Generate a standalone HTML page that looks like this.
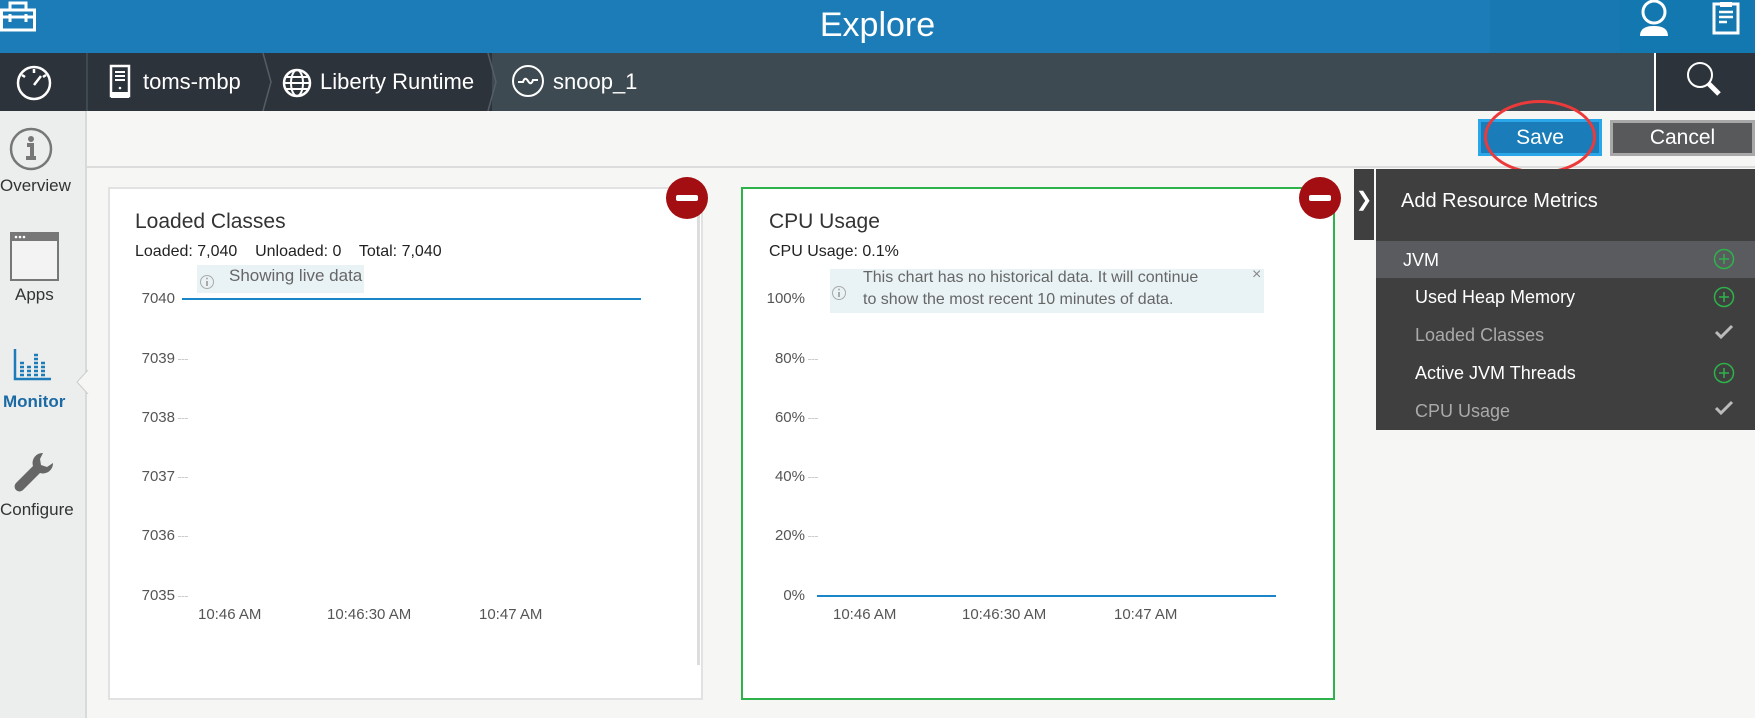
<!DOCTYPE html>
<html><head><meta charset="utf-8"><style>
*{margin:0;padding:0;box-sizing:border-box}
body{width:1755px;height:718px;overflow:hidden;background:#f6f6f4;font-family:"Liberation Sans",sans-serif;position:relative;color:#333}
.a{position:absolute}
.top{left:0;top:0;width:1755px;height:53px;background:#1b7cb8}
.nav{left:0;top:53px;width:1755px;height:58px;background:#3e4a52}
.t{white-space:nowrap}
.card{background:#fff;border:2px solid #e2e2e2}
.yl{font-size:15px;color:#555;text-align:right;width:40px}
.xl{font-size:15px;color:#555}
.minus{width:42px;height:42px;border-radius:50%;background:#a30e12}
.minus:after{content:"";position:absolute;left:10px;top:18px;width:22px;height:6px;background:#fff;border-radius:2px}
.row{left:1376px;width:379px;height:38px;background:#3f3f3f;color:#fff;font-size:18px}
.row span{position:absolute;left:39px;top:9px}
.tk{height:0;border-top:1px dashed #ccc;width:10px}
</style></head><body>
<div class="a top"></div>
<div class="a" style="left:1620px;top:0;width:135px;height:53px;background:#1378b0"></div>
<div class="a" style="left:1490px;top:0;width:130px;height:53px;background:#1778b2"></div>
<div class="a t" style="left:0;width:1755px;top:6px;text-align:center;color:#fff;font-size:34px">Explore</div>
<svg class="a" style="left:0;top:0" width="40" height="34"><rect x="1.5" y="10" width="33" height="20" fill="none" stroke="#fff" stroke-width="3"/><path d="M10 10V3h16v7M1 17h34M10 14v8M26 14v8" stroke="#fff" stroke-width="3" fill="none"/></svg>
<svg class="a" style="left:1637px;top:0" width="34" height="38"><circle cx="17" cy="12" r="11" fill="none" stroke="#fff" stroke-width="3"/><path d="M3 36q0-10 14-10q14 0 14 10z" fill="#fff"/></svg>
<svg class="a" style="left:1711px;top:0" width="30" height="36"><path d="M3 4h24v29H3z" fill="none" stroke="#fff" stroke-width="3"/><path d="M9 2h12v5H9z" fill="#fff"/><path d="M8 12h14M8 17h14M8 22h8" stroke="#fff" stroke-width="2.5"/></svg>
<div class="a nav"></div>
<div class="a" style="left:0;top:53px;width:492px;height:58px;background:#2d333a"></div>
<div class="a" style="left:86px;top:53px;width:2px;height:58px;background:#3e4a52"></div>
<svg class="a" style="left:225px;top:53px" width="300" height="58"><path d="M38 0l8 29-8 29M263 0l8 29-8 29" stroke="#555e66" stroke-width="1.5" fill="none"/></svg>
<svg class="a" style="left:14px;top:63px" width="40" height="40"><circle cx="20" cy="20" r="16" fill="none" stroke="#fff" stroke-width="2.5"/><path d="M20 6v4M8 12l3 2M32 12l-3 2M20 22l7-9" stroke="#fff" stroke-width="2.5"/></svg>
<svg class="a" style="left:109px;top:64px" width="24" height="36"><rect x="2" y="2" width="18" height="30" fill="none" stroke="#fff" stroke-width="2.5"/><path d="M6 8h10M6 12h10M6 16h10" stroke="#fff" stroke-width="2"/><rect x="2" y="28" width="18" height="6" fill="#fff"/><circle cx="11" cy="24" r="1.3" fill="#fff"/></svg>
<div class="a t" style="left:143px;top:69px;color:#fff;font-size:22px">toms-mbp</div>
<svg class="a" style="left:282px;top:68px" width="30" height="30"><circle cx="15" cy="15" r="13" fill="none" stroke="#fff" stroke-width="2.5"/><ellipse cx="15" cy="15" rx="6" ry="13" fill="none" stroke="#fff" stroke-width="2"/><path d="M2 15h26M4 9h22M4 21h22" stroke="#fff" stroke-width="2"/></svg>
<div class="a t" style="left:320px;top:69px;color:#fff;font-size:22px">Liberty Runtime</div>
<svg class="a" style="left:511px;top:64px" width="34" height="34"><circle cx="17" cy="17" r="15" fill="none" stroke="#fff" stroke-width="2"/><path d="M7 18h5q2-6 5-1q3 5 5-1h5" stroke="#fff" stroke-width="2" fill="none"/></svg>
<div class="a t" style="left:553px;top:69px;color:#fff;font-size:22px">snoop_1</div>
<div class="a" style="left:1654px;top:53px;width:101px;height:58px;background:#2d333a;border-left:2px solid #fff"></div>
<svg class="a" style="left:1685px;top:60px" width="42" height="42"><circle cx="15" cy="15" r="12" fill="none" stroke="#fff" stroke-width="2"/><path d="M24 24l10 10" stroke="#fff" stroke-width="5"/></svg>

<div class="a" style="left:0;top:111px;width:87px;height:607px;background:#eceded;border-right:2px solid #d9d9d9"></div>
<svg class="a" style="left:9px;top:127px" width="44" height="44"><circle cx="22" cy="22" r="20" fill="none" stroke="#777" stroke-width="2.5"/><circle cx="22" cy="12" r="3" fill="#777"/><path d="M18 18h5v13M17 31h10" stroke="#777" stroke-width="4" fill="none"/></svg>
<div class="a t" style="left:0;top:176px;font-size:17px;color:#333">Overview</div>
<svg class="a" style="left:10px;top:232px" width="50" height="50"><rect x="1" y="1" width="47" height="47" fill="#f3f3f3" stroke="#777" stroke-width="2"/><rect x="1" y="1" width="47" height="8" fill="#777"/><circle cx="6" cy="5" r="1.3" fill="#fff"/><circle cx="10" cy="5" r="1.3" fill="#fff"/><circle cx="14" cy="5" r="1.3" fill="#fff"/></svg>
<div class="a t" style="left:15px;top:285px;font-size:17px;color:#333">Apps</div>
<svg class="a" style="left:13px;top:349px" width="40" height="32"><path d="M2 0v30h36" stroke="#1b7cb8" stroke-width="2.5" fill="none"/><path d="M7 14h4M7 18h4M7 22h4M7 26h4M14 18h4M14 22h4M14 26h4M21 6h4M21 10h4M21 14h4M21 18h4M21 22h4M21 26h4M28 14h4M28 18h4M28 22h4M28 26h4" stroke="#1b7cb8" stroke-width="2.5"/></svg>
<div class="a t" style="left:3px;top:392px;font-size:17px;color:#1b6aa4;font-weight:bold">Monitor</div>
<svg class="a" style="left:76px;top:370px" width="14" height="24"><path d="M12 0L1 12l11 12" fill="#f6f6f4" stroke="#ccc"/></svg>
<svg class="a" style="left:13px;top:451px" width="42" height="44"><path d="M30 2a10 10 0 0 0-10 13L3 32a4 4 0 0 0 7 7l17-17a10 10 0 0 0 13-10l-6 4-6-2-1-6z" fill="#666"/></svg>
<div class="a t" style="left:0;top:500px;font-size:17px;color:#333">Configure</div>

<div class="a" style="left:87px;top:166px;width:1668px;height:2px;background:#dcdcdc"></div>
<div class="a t" style="left:1478px;top:119px;width:124px;height:37px;background:#1a7cb8;border:3px solid #2aa7e8;color:#fff;font-size:21px;text-align:center;line-height:31px">Save</div>
<div class="a" style="left:1484px;top:100px;width:112px;height:74px;border:3px solid #ec3a3a;border-radius:50%"></div>
<div class="a t" style="left:1610px;top:120px;width:145px;height:36px;background:#58595b;border:3px solid #a8a8a8;color:#fff;font-size:21px;text-align:center;line-height:30px">Cancel</div>

<div class="a card" style="left:108px;top:187px;width:595px;height:513px"></div>
<div class="a t" style="left:135px;top:210px;font-size:21px;color:#333">Loaded Classes</div>
<div class="a t" style="left:135px;top:243px;font-size:16px;color:#222">Loaded: 7,040&nbsp;&nbsp;&nbsp; Unloaded: 0&nbsp;&nbsp;&nbsp; Total: 7,040</div>
<div class="a" style="left:197px;top:265px;width:167px;height:28px;background:#e9f3f5"></div>
<svg class="a" style="left:199px;top:274px" width="16" height="16"><circle cx="8" cy="8" r="6.5" fill="none" stroke="#aaa"/><path d="M8 7v5" stroke="#aaa" stroke-width="2"/><circle cx="8" cy="4.5" r="1" fill="#aaa"/></svg>
<div class="a t" style="left:229px;top:266px;font-size:17px;color:#666">Showing live data</div>
<div class="a yl" style="left:135px;top:290px">7040</div>
<div class="a yl" style="left:135px;top:350px">7039</div>
<div class="a yl" style="left:135px;top:409px">7038</div>
<div class="a yl" style="left:135px;top:468px">7037</div>
<div class="a yl" style="left:135px;top:527px">7036</div>
<div class="a yl" style="left:135px;top:587px">7035</div>
<div class="a tk" style="left:178px;top:359px"></div><div class="a tk" style="left:178px;top:418px"></div><div class="a tk" style="left:178px;top:477px"></div><div class="a tk" style="left:178px;top:536px"></div><div class="a tk" style="left:178px;top:596px"></div>
<div class="a" style="left:182px;top:298px;width:459px;height:2px;background:#1a86c8"></div>
<div class="a xl t" style="left:198px;top:606px">10:46 AM</div>
<div class="a xl t" style="left:327px;top:606px">10:46:30 AM</div>
<div class="a xl t" style="left:479px;top:606px">10:47 AM</div>
<div class="a" style="left:697px;top:200px;width:3px;height:465px;background:#ddd"></div>
<div class="a minus" style="left:666px;top:177px"></div>

<div class="a card" style="left:741px;top:187px;width:594px;height:513px;border-color:#2db34a"></div>
<div class="a t" style="left:769px;top:210px;font-size:21px;color:#333">CPU Usage</div>
<div class="a t" style="left:769px;top:243px;font-size:16px;color:#222">CPU Usage: 0.1%</div>
<div class="a" style="left:830px;top:269px;width:434px;height:44px;background:#e9f3f5"></div>
<svg class="a" style="left:831px;top:285px" width="16" height="16"><circle cx="8" cy="8" r="6.5" fill="none" stroke="#aaa"/><path d="M8 7v5" stroke="#aaa" stroke-width="2"/><circle cx="8" cy="4.5" r="1" fill="#aaa"/></svg>
<div class="a t" style="left:863px;top:267px;font-size:16px;color:#666;line-height:22px">This chart has no historical data. It will continue<br>to show the most recent 10 minutes of data.</div>
<div class="a t" style="left:1252px;top:266px;font-size:16px;color:#888">×</div>
<div class="a yl" style="left:765px;top:290px">100%</div>
<div class="a yl" style="left:765px;top:350px">80%</div>
<div class="a yl" style="left:765px;top:409px">60%</div>
<div class="a yl" style="left:765px;top:468px">40%</div>
<div class="a yl" style="left:765px;top:527px">20%</div>
<div class="a yl" style="left:765px;top:587px">0%</div>
<div class="a tk" style="left:808px;top:359px"></div><div class="a tk" style="left:808px;top:418px"></div><div class="a tk" style="left:808px;top:477px"></div><div class="a tk" style="left:808px;top:536px"></div>
<div class="a" style="left:817px;top:595px;width:459px;height:2px;background:#1a86c8"></div>
<div class="a xl t" style="left:833px;top:606px">10:46 AM</div>
<div class="a xl t" style="left:962px;top:606px">10:46:30 AM</div>
<div class="a xl t" style="left:1114px;top:606px">10:47 AM</div>
<div class="a minus" style="left:1299px;top:177px"></div>

<div class="a" style="left:1354px;top:169px;width:20px;height:71px;background:#3f3f3f;color:#fff;font-size:20px;text-align:center;line-height:62px">❯</div>
<div class="a" style="left:1376px;top:169px;width:379px;height:72px;background:#3f3f3f"></div>
<div class="a t" style="left:1401px;top:190px;color:#fff;font-size:20px">Add Resource Metrics</div>
<div class="a row" style="top:241px;background:#5a5b5e"><span style="left:27px">JVM</span></div>
<div class="a row" style="top:278px"><span>Used Heap Memory</span></div>
<div class="a row" style="top:316px;color:#aaa"><span>Loaded Classes</span></div>
<div class="a row" style="top:354px"><span>Active JVM Threads</span></div>
<div class="a row" style="top:392px;height:38px;color:#aaa"><span>CPU Usage</span></div>
<svg class="a" style="left:1712px;top:248px" width="24" height="140"><g fill="none" stroke="#2db34a" stroke-width="1.5"><circle cx="12" cy="11" r="9.5"/><circle cx="12" cy="49" r="9.5"/><circle cx="12" cy="125" r="9.5"/><path d="M12 6v10M7 11h10M12 44v10M7 49h10M12 120v10M7 125h10"/></g></svg>
<svg class="a" style="left:1712px;top:318px" width="24" height="100"><path d="M4 14l5 5 11-11M4 90l5 5 11-11" stroke="#bbb" stroke-width="3" fill="none"/></svg>
</body></html>
